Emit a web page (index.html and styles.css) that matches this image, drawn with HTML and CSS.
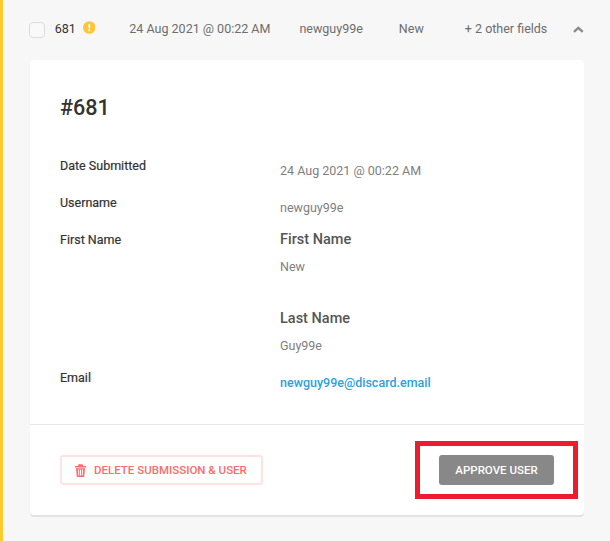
FILE: index.html
```html
<!DOCTYPE html>
<html lang="en">
<head>
<meta charset="utf-8">
<title>Submission 681</title>
<link rel="stylesheet" href="styles.css">
</head>
<body>
<div class="submission">
  <div class="summary">
    <span class="checkbox"></span>
    <span class="id">681</span>
    <svg class="alert" width="13" height="13" viewBox="0 0 14 14"><circle cx="7" cy="7" r="7" fill="#fdc53a"/><rect x="6" y="3" width="2" height="5" rx="1" fill="#fff"/><circle cx="7" cy="10" r="1.100" fill="#fff"/></svg>
    <span class="cell date">24 Aug 2021 @ 00:22 AM</span>
    <span class="cell user">newguy99e</span>
    <span class="cell first">New</span>
    <span class="cell more">+ 2 other fields</span>
    <svg class="chevron" width="11" height="7" viewBox="0 0 11 7"><path d="M1 6 5.500 1.800 10 6" fill="none" stroke="#8a8a8a" stroke-width="2.400"/></svg>
  </div>
  <div class="card">
    <div class="body">
      <h1 class="title">#681</h1>
      <div class="row row-date">
        <div class="label">Date Submitted</div>
        <div class="value">24 Aug 2021 @ 00:22 AM</div>
      </div>
      <div class="row row-user">
        <div class="label">Username</div>
        <div class="value">newguy99e</div>
      </div>
      <div class="row row-name">
        <div class="label">First Name</div>
        <div class="subfields">
          <div class="subfield">
            <div class="subhead">First Name</div>
            <div class="subvalue">New</div>
          </div>
          <div class="subfield">
            <div class="subhead">Last Name</div>
            <div class="subvalue">Guy99e</div>
          </div>
        </div>
      </div>
      <div class="row row-email">
        <div class="label">Email</div>
        <a class="value link" href="#">newguy99e@discard.email</a>
      </div>
    </div>
    <div class="footer">
      <button class="btn-delete" type="button">
        <svg width="11" height="13" viewBox="0 0 11 13"><path d="M0 2h11v1.500H0zM3.500 .3h4l.6 1.700H2.900z" fill="#ff6b6b"/><path fill-rule="evenodd" d="M1 4.200h9l-.8 8.800H1.800zM3.100 5.500l.3 6h.9l-.2-6zM5 5.500v6h1v-6zM7 5.500l-.2 6h.9l.3-6z" fill="#ff6b6b"/></svg>
        DELETE SUBMISSION &amp; USER
      </button>
      <div class="highlight">
        <button class="btn-approve" type="button">APPROVE USER</button>
      </div>
    </div>
  </div>
</div>
</body>
</html>
```
FILE: styles.css
```css
* { box-sizing: border-box; }
html, body { margin: 0; height: 100%; }
body {
  background: #f7f7f7;
  font-family: Roboto, "Liberation Sans", sans-serif;
  overflow: hidden;
}
.submission {
  height: 541px;
  border-left: 3px solid #fdcb2e;
  padding: 0 26px 0 27px;
}
.summary {
  display: flex;
  align-items: center;
  height: 60px;
  padding-bottom: 3px;
  font-size: 12.5px;
  color: #6d6d6d;
}
.checkbox {
  width: 16px;
  height: 16px;
  margin: 3px 0 0 -1px;
  background: #f9f9f9;
  border: 1px solid #dcdcdc;
  border-radius: 4px;
}
.id { margin-left: 10px; color: #333; }
.alert { margin: -2px 0 0 7px; }
.cell { white-space: nowrap; }
.date { margin-left: 34px; }
.user { margin-left: 29px; }
.first { margin-left: 36px; }
.more { margin-left: 41px; }
.chevron { margin: 2px 0 0 26px; }
.card {
  background: #fff;
  border-radius: 4px;
  box-shadow: 0 2px 0 #e3e3e3;
  height: 455px;
  display: flex;
  flex-direction: column;
}
.body { flex: 1; padding: 35px 30px 0; }
.title {
  margin: 0 0 37px;
  font-size: 21.600px;
  line-height: 26px;
  font-weight: 500;
  color: #333;
}
.row { display: grid; grid-template-columns: 220px 1fr; }
.label { font-size: 12.5px; line-height: 15px; color: #333; -webkit-text-stroke: 0.2px #333; }
.value { font-size: 12.5px; line-height: 15px; color: #808080; margin-top: 5px; }
.row-date { height: 37px; }
.row-user { height: 37px; }
.row-name { height: 138px; }
.link { color: #2d9fe3; text-decoration: none; font-weight: 500; display: block; }
.subfields { margin-top: -1px; }
.subfield { height: 79px; }
.subhead { font-size: 14.500px; line-height: 18px; font-weight: 500; color: #555; }
.subvalue { font-size: 12.5px; line-height: 15px; color: #808080; margin-top: 10px; }
.footer {
  height: 91px;
  border-top: 1px solid #e6e6e6;
  display: flex;
  align-items: center;
  justify-content: space-between;
  padding: 0 6px 0 30px;
}
button { font-family: inherit; cursor: pointer; }
.btn-delete {
  display: flex;
  align-items: center;
  gap: 8px;
  width: 203px;
  height: 30px;
  padding: 0 0 0 13px;
  background: #fff;
  border: 2px solid #ffe3e3;
  border-radius: 3px;
  color: #ff6b6b;
  font-size: 11.500px;
  font-weight: 500;
}
.highlight {
  width: 163px;
  height: 58px;
  border: 5px solid #ed1c2c;
  display: flex;
  align-items: center;
  justify-content: center;
}
.btn-approve {
  width: 115px;
  height: 30px;
  background: #888;
  border: 0;
  border-radius: 3px;
  color: #fff;
  font-size: 11.500px;
  font-weight: 500;
  padding: 0;
}
```
